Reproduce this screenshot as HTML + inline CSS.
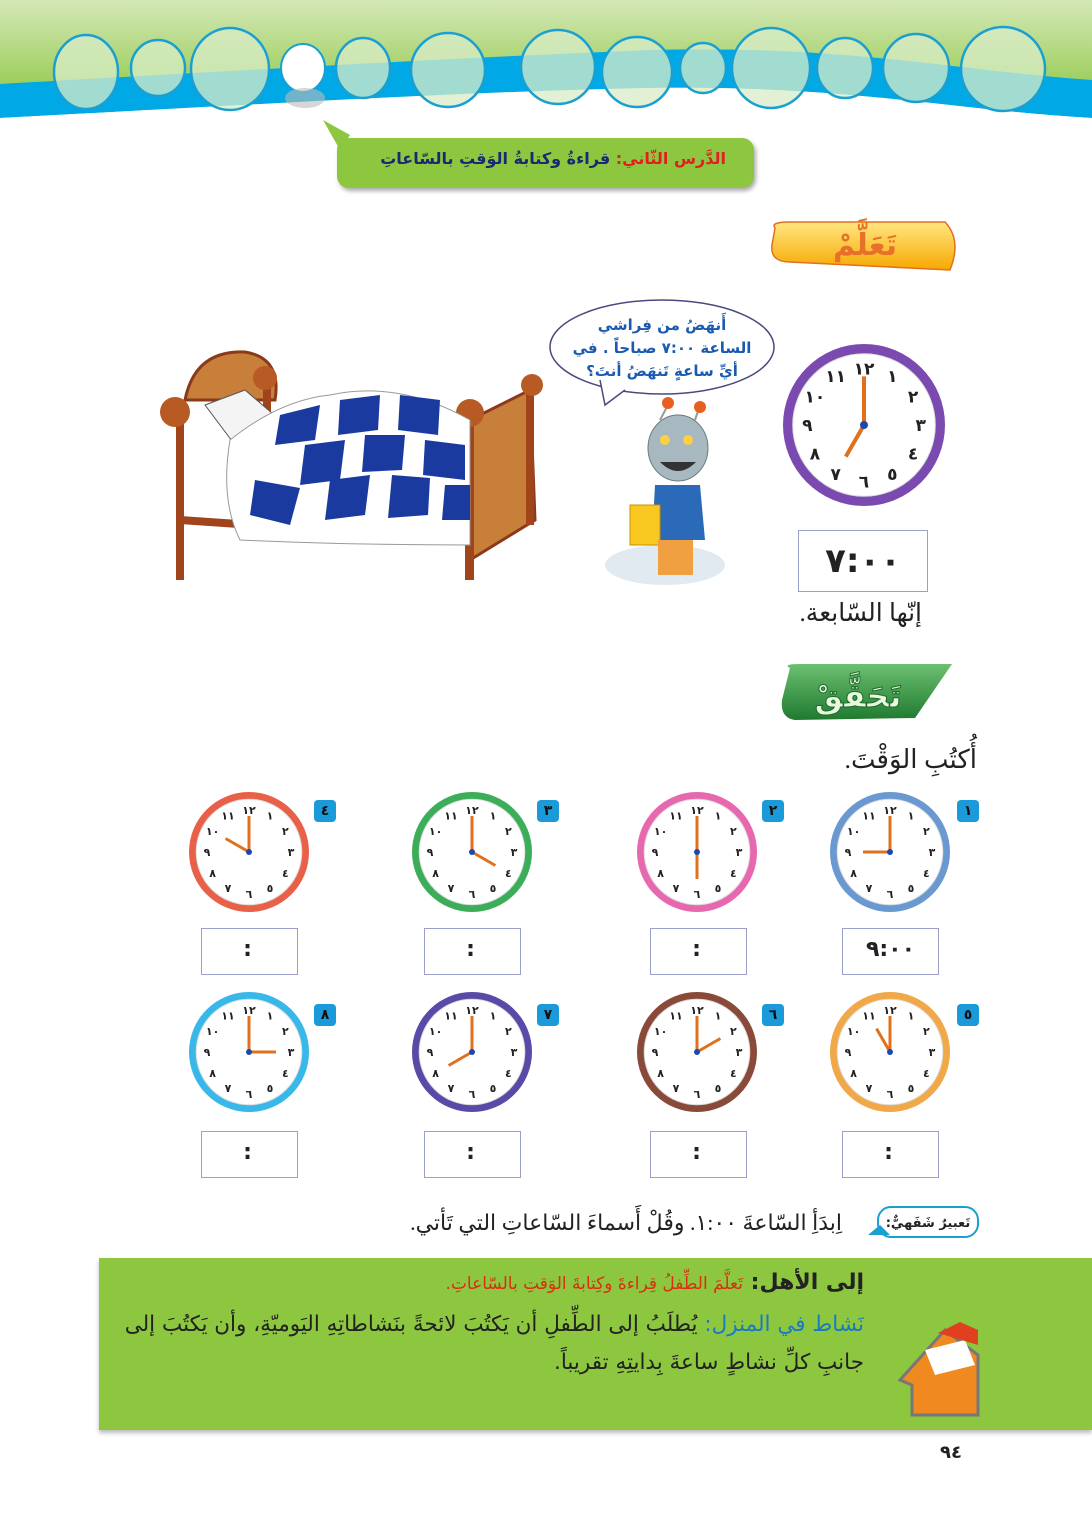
<!DOCTYPE html>
<html><head><meta charset="utf-8">
<style>
*{margin:0;padding:0;box-sizing:border-box}
body{width:1092px;height:1519px;position:relative;background:#fff;overflow:hidden;font-family:"Liberation Serif","Noto Serif CJK SC","DejaVu Sans",serif}
.a{position:absolute}
.t{direction:rtl;white-space:nowrap}
.box{position:absolute;border:1.5px solid #9aa0c8;background:#fff;text-align:center;font:bold 22px "DejaVu Sans",sans-serif;color:#222;line-height:42px}
.num{position:absolute;width:22px;height:22px;border-radius:4px;background:#1a9ad8;color:#111;font:bold 14px "DejaVu Sans",sans-serif;text-align:center;line-height:22px}
</style></head><body>
<svg class="a" style="left:0;top:0" width="1092" height="1519" viewBox="0 0 1092 1519">
<defs>
<linearGradient id="g1" x1="0" y1="0" x2="0" y2="1"><stop offset="0" stop-color="#d4e8b8"/><stop offset="1" stop-color="#8cc63f"/></linearGradient>
<linearGradient id="y1" x1="0" y1="0" x2="0" y2="1"><stop offset="0" stop-color="#ffe680"/><stop offset="1" stop-color="#f7a800"/></linearGradient>
<linearGradient id="gr" x1="0" y1="0" x2="0" y2="1"><stop offset="0" stop-color="#6cc070"/><stop offset="1" stop-color="#1f7a30"/></linearGradient>
</defs>
<rect x="0" y="0" width="1092" height="110" fill="url(#g1)"/>
<path d="M0 84 C250 70 450 58 650 50 C850 45 950 70 1092 80 L1092 118 C950 110 850 85 650 88 C450 92 250 105 0 118Z" fill="#00a8e6"/>
<path d="M0 118 C250 105 450 92 650 88 C850 85 950 110 1092 118 L1092 130 L0 130Z" fill="#fff"/>
<g fill="#d8ecc8" fill-opacity="0.75" stroke="#1aa0d0" stroke-width="2.5">
<ellipse cx="86" cy="72" rx="32" ry="37"/><ellipse cx="158" cy="68" rx="27" ry="28"/><ellipse cx="230" cy="69" rx="39" ry="41"/>
<ellipse cx="363" cy="68" rx="27" ry="30"/><ellipse cx="448" cy="70" rx="37" ry="37"/><ellipse cx="558" cy="67" rx="37" ry="37"/>
<ellipse cx="637" cy="72" rx="35" ry="35"/><ellipse cx="703" cy="68" rx="23" ry="25"/><ellipse cx="771" cy="68" rx="39" ry="40"/>
<ellipse cx="845" cy="68" rx="28" ry="30"/><ellipse cx="916" cy="68" rx="33" ry="34"/><ellipse cx="1003" cy="69" rx="42" ry="42"/>
</g>
<ellipse cx="303" cy="68" rx="22" ry="24" fill="#fff" stroke="#1aa0d0" stroke-width="2"/>
<ellipse cx="305" cy="98" rx="20" ry="10" fill="#bbb" opacity=".6"/>
<path d="M323 120 L350 135 L340 150Z" fill="#8dc63f"/>
<rect x="337" y="138" width="417" height="50" rx="12" fill="#8dc63f" filter="drop-shadow(2px 3px 2px #aaa)"/>
<path d="M775 228 Q770 222 790 222 L945 222 Q962 240 950 270 L790 262 Q770 262 772 245Z" fill="url(#y1)" stroke="#e07020" stroke-width="1.5"/>
<text x="865" y="255" text-anchor="middle" font-size="30" font-weight="bold" fill="#e8702a" font-family="DejaVu Sans">تَعَلَّمْ</text>
<path d="M790 668 Q782 664 800 664 L952 664 L915 718 L795 720 Q780 718 782 700Z" fill="url(#gr)"/>
<text x="858" y="707" text-anchor="middle" font-size="32" font-weight="bold" fill="#e8f8e0" stroke="#1f6a28" stroke-width="1" font-family="DejaVu Sans">تَحَقَّقْ</text>
<g>
<path d="M185 400 Q195 350 245 352 Q282 358 275 400Z" fill="#c87f3a" stroke="#8a3a1a" stroke-width="3"/>
<rect x="176" y="400" width="8" height="180" fill="#a0441c"/>
<rect x="263" y="378" width="8" height="150" fill="#a0441c"/>
<circle cx="175" cy="412" r="15" fill="#b85a24"/><circle cx="265" cy="378" r="12" fill="#b85a24"/>
<path d="M470 420 L530 390 L535 520 L470 560Z" fill="#c87f3a" stroke="#8a3a1a" stroke-width="3"/>
<rect x="465" y="420" width="9" height="160" fill="#a0441c"/><rect x="526" y="385" width="8" height="140" fill="#a0441c"/>
<circle cx="470" cy="413" r="14" fill="#b85a24"/><circle cx="532" cy="385" r="11" fill="#b85a24"/>
<path d="M180 520 L470 540" stroke="#a0441c" stroke-width="8"/>
<path d="M205 405 L245 390 L280 420 L235 445Z" fill="#f4f4f4" stroke="#555"/>
<path d="M230 440 Q280 400 330 395 Q400 380 470 420 L470 545 Q350 545 240 540 Q220 500 230 440Z" fill="#fff" stroke="#999"/>
<g fill="#1a3aa0">
<path d="M280 415 L320 405 L315 440 L275 445Z"/><path d="M340 400 L380 395 L378 430 L338 435Z"/><path d="M400 395 L440 400 L438 435 L398 430Z"/>
<path d="M305 445 L345 440 L340 480 L300 485Z"/><path d="M365 435 L405 435 L402 470 L362 472Z"/><path d="M425 440 L465 445 L465 480 L423 475Z"/>
<path d="M255 480 L300 488 L290 525 L250 515Z"/><path d="M330 480 L370 475 L365 515 L325 520Z"/><path d="M392 475 L430 478 L428 515 L388 518Z"/><path d="M445 485 L470 485 L470 520 L442 520Z"/>
</g>
</g>
<ellipse cx="662" cy="347" rx="112" ry="47" fill="#fff" stroke="#4a4a80" stroke-width="1.5"/>
<path d="M600 380 L605 405 L625 390" fill="#fff" stroke="#4a4a80" stroke-width="1.5"/>
<text font-family="DejaVu Sans" font-size="15" font-weight="bold" fill="#1a5ab0" text-anchor="middle" direction="rtl">
<tspan x="662" y="330">أَنهَضُ من فِراشي</tspan><tspan x="662" y="353">الساعة ٧:٠٠ صباحاً . في</tspan><tspan x="662" y="376">أيِّ ساعةٍ تَنهَضُ أنتَ؟</tspan></text>
<ellipse cx="665" cy="565" rx="60" ry="20" fill="#e0eaf0"/>
<line x1="660" y1="420" x2="668" y2="405" stroke="#999" stroke-width="2"/><line x1="695" y1="420" x2="700" y2="405" stroke="#999" stroke-width="2"/>
<circle cx="668" cy="403" r="6" fill="#e86020"/><circle cx="700" cy="407" r="6" fill="#e86020"/>
<ellipse cx="678" cy="448" rx="30" ry="33" fill="#a8b8c0" stroke="#6a7a80"/>
<path d="M660 462 Q678 480 696 462" fill="#333"/>
<circle cx="665" cy="440" r="5" fill="#ffd040"/><circle cx="688" cy="440" r="5" fill="#ffd040"/>
<path d="M655 485 L700 485 L705 540 L652 540Z" fill="#2a6ab8"/>
<rect x="630" y="505" width="30" height="40" fill="#f8c820" stroke="#c89000"/>
<rect x="658" y="540" width="35" height="35" fill="#f0a040"/>
<g id="bigclock"></g>
<rect x="99" y="1258" width="993" height="172" fill="#8dc63f" filter="drop-shadow(0 3px 2px #bbb)"/>
<path d="M900 1380 L945 1330 L978 1355 L978 1415 L912 1415 L912 1385Z" fill="#f08a20" stroke="#777" stroke-width="3"/>
<path d="M925 1350 L965 1340 L975 1365 L935 1375Z" fill="#fff"/>
<path d="M938 1333 L960 1322 L978 1330 L978 1345Z" fill="#e04020"/>
<rect x="878" y="1207" width="100" height="30" rx="13" fill="#fff" stroke="#1aa0d0" stroke-width="2"/>
<path d="M880 1225 L868 1235 L890 1235" fill="#1aa0d0"/>
<text x="928" y="1227" text-anchor="middle" font-size="13" font-weight="bold" fill="#222" font-family="DejaVu Sans" direction="rtl">تَعبيرٌ شَفَهيٌّ:</text>
<g id="clocks"></g>
</svg>

<div class="a t" style="right:366px;top:149px;font:bold 16px 'DejaVu Sans',sans-serif;color:#1a2a70"><span style="color:#e02020">الدَّرس الثّاني: </span>قراءةُ وكتابةُ الوَقتِ بالسّاعاتِ</div>
<div class="box" style="left:798px;top:530px;width:130px;height:62px;line-height:60px;font-size:34px;letter-spacing:8px">٧:٠٠</div>
<div class="a t" style="right:170px;top:598px;font-size:25px;color:#222">إنّها السّابعة.</div>
<div class="a t" style="right:115px;top:745px;font-size:26px;color:#222">أُكتُبِ الوَقْتَ.</div>
<div class="a t" style="right:250px;top:1210px;font-size:22px;color:#222">اِبدَأِ السّاعةَ ١:٠٠. وقُلْ أَسماءَ السّاعاتِ التي تَأتي.</div>
<div class="a t" style="right:228px;top:1270px;font:17px 'DejaVu Sans',sans-serif;color:#222"><b style="font-size:22px">إلى الأهل: </b><span style="color:#d83010">تَعلَّمَ الطِّفلُ قِراءةَ وكِتابةَ الوَقتِ بالسّاعاتِ.</span></div>
<div class="a t" style="right:228px;top:1312px;font:21.5px 'DejaVu Sans',sans-serif;color:#222"><span style="color:#1a7ac0">نَشاط في المنزل: </span>يُطلَبُ إلى الطِّفلِ أن يَكتُبَ لائحةً بنَشاطاتِهِ اليَوميّةِ، وأن يَكتُبَ إلى</div>
<div class="a t" style="right:228px;top:1350px;font:21.5px 'DejaVu Sans',sans-serif;color:#222">جانبِ كلِّ نشاطٍ ساعةَ بِدايتِهِ تقريباً.</div>
<div class="a" style="left:940px;top:1442px;font:bold 18px 'DejaVu Sans',sans-serif;color:#222">٩٤</div>

<div id="extra"></div>
<script>
var ar=['١٢','١','٢','٣','٤','٥','٦','٧','٨','٩','١٠','١١'];
function clock(cx,cy,r,col,h,big){
 var s='<circle cx="'+cx+'" cy="'+cy+'" r="'+r+'" fill="'+col+'"/><circle cx="'+cx+'" cy="'+cy+'" r="'+(r*0.88)+'" fill="#fff" stroke="#ddd"/>';
 var fs=big?17:11;
 for(var i=0;i<12;i++){var a=i*Math.PI/6;var x=cx+Math.sin(a)*r*0.7,y=cy-Math.cos(a)*r*0.7+fs*0.35;
  s+='<text x="'+x+'" y="'+y+'" text-anchor="middle" font-size="'+fs+'" font-weight="bold" fill="#222" font-family="DejaVu Sans">'+ar[i]+'</text>';}
 var ha=h*Math.PI/6;var hx=cx+Math.sin(ha)*r*0.45,hy=cy-Math.cos(ha)*r*0.45;
 var sw=big?4:3;
 s+='<line x1="'+cx+'" y1="'+cy+'" x2="'+cx+'" y2="'+(cy-r*0.6)+'" stroke="#e0701e" stroke-width="'+sw+'"/>';
 s+='<line x1="'+cx+'" y1="'+cy+'" x2="'+hx+'" y2="'+hy+'" stroke="#e0701e" stroke-width="'+sw+'"/>';
 s+='<circle cx="'+cx+'" cy="'+cy+'" r="'+(big?4:3)+'" fill="#1a4ab0"/>';
 return s;}
document.getElementById('bigclock').outerHTML=clock(864,425,81,'#7a4ab0',7,true);
var cl=[[890,852,'#6a98d0',9],[697,852,'#e868b0',6],[472,852,'#3cae5a',4],[249,852,'#e86048',10],
[890,1052,'#f0a848',11],[697,1052,'#8a4a3a',2],[472,1052,'#5a4aa8',8],[249,1052,'#38b8e8',3]];
var s='';cl.forEach(function(c){s+=clock(c[0],c[1],60,c[2],c[3],false);});
document.getElementById('clocks').outerHTML=s;
var nums=['١','٢','٣','٤','٥','٦','٧','٨'],nx=[957,762,537,314],e='';
var bx=[842,650,424,201];
for(var i=0;i<8;i++){var x=nx[i%4],y=i<4?800:1004;e+='<div class="num" style="left:'+x+'px;top:'+y+'px">'+nums[i]+'</div>';
 var by=i<4?928:1131;e+='<div class="box" style="left:'+bx[i%4]+'px;top:'+by+'px;width:97px;height:47px;letter-spacing:4px">'+(i==0?'٩:٠٠':':')+'</div>';}
document.getElementById('extra').innerHTML=e;
</script>
</body></html>
